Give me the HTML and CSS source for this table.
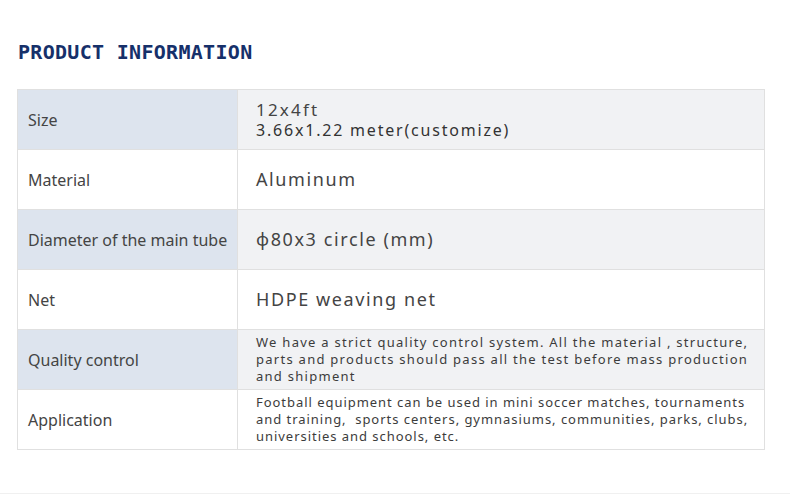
FILE: index.html
```html
<!DOCTYPE html>
<html>
<head>
<meta charset="utf-8">
<link rel="stylesheet" href="styles.css">
</head>
<body>
<section class="info">
  <h2 class="title">PRODUCT INFORMATION</h2>
  <div class="spec">
    <div class="label shade">Size</div>
    <div class="value shade-v">
      <span class="line first">12x4ft</span>
      <span class="line strong">3.66x1.22 meter(customize)</span>
    </div>

    <div class="label">Material</div>
    <div class="value big">Aluminum</div>

    <div class="label shade">Diameter of the main tube</div>
    <div class="value big shade-v">φ80x3 circle (mm)</div>

    <div class="label">Net</div>
    <div class="value big">HDPE weaving net</div>

    <div class="label shade">Quality control</div>
    <div class="value small wide shade-v">We have a strict quality control system. All the material , structure,<br>parts and products should pass all the test before mass production<br>and shipment</div>

    <div class="label">Application</div>
    <div class="value small tight">Football equipment can be used in mini soccer matches, tournaments<br>and training,&nbsp; sports centers, gymnasiums, communities, parks, clubs,<br>universities and schools, etc.</div>
  </div>
</section>
<div class="foot"></div>
</body>
</html>
```
FILE: styles.css
```css
html, body {
  margin: 0;
  padding: 0;
  background: #fff;
}
body {
  font-family: "Noto Sans", "Open Sans", sans-serif;
  width: 790px;
}
.info {
  padding: 40px 25px 0 17px;
}
.title {
  margin: 0 0 25px 1px;
  font-family: "DejaVu Sans Mono", monospace;
  font-weight: bold;
  font-size: 20px;
  line-height: 24px;
  letter-spacing: 0.3px;
  color: #16306a;
}
.spec {
  display: grid;
  grid-template-columns: 220px 1fr;
  grid-auto-rows: 60px;
  border-top: 1px solid #e0e0e0;
  border-left: 1px solid #e0e0e0;
  width: 748px;
  box-sizing: border-box;
}
.label, .value {
  box-sizing: border-box;
  border-right: 1px solid #e0e0e0;
  border-bottom: 1px solid #e0e0e0;
  display: flex;
  flex-direction: column;
  justify-content: center;
}
.label {
  padding-left: 10px;
  font-size: 16px;
  color: #444;
  background: #fff;
}
.label.shade {
  background: #dde4ee;
}
.value {
  padding: 0 6px 0 18px;
  color: #444;
  font-size: 16px;
  letter-spacing: 1.2px;
  line-height: 21px;
  background: #fff;
  white-space: nowrap;
}
.value.shade-v {
  background: #f1f2f4;
}
.value .line {
  display: block;
}
.value .first {
  font-size: 17px;
  letter-spacing: 2.2px;
}
.value .strong {
  color: #333;
  letter-spacing: 1.8px;
}
.value.big {
  font-size: 18px;
  letter-spacing: 1.6px;
}
.value.small {
  font-size: 13px;
  line-height: 17px;
  letter-spacing: 1.1px;
  color: #3c3c3c;
}
.value.small.wide {
  letter-spacing: 1.27px;
}
.value.small.tight {
  letter-spacing: 0.96px;
}
.foot {
  margin-top: 43px;
  border-top: 1px solid #f0f0f0;
  height: 1px;
}
```
